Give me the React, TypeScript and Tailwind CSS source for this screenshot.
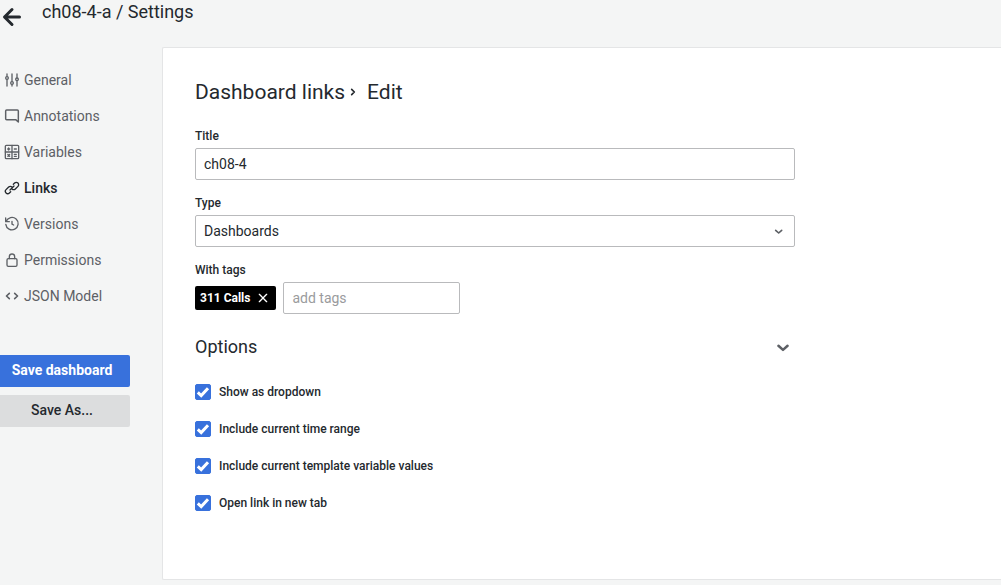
import { useState } from "react";
import type { ReactNode } from "react";

function Glyph({ children, className = "size-4" }: { children: ReactNode; className?: string }) {
  return (
    <svg
      viewBox="0 0 24 24"
      className={`shrink-0 ${className}`}
      fill="none"
      stroke="currentColor"
      strokeWidth="2"
      strokeLinecap="round"
      strokeLinejoin="round"
      aria-hidden="true"
    >
      {children}
    </svg>
  );
}

const icons = {
  general: (
    <>
      <path d="M4.5 3v3.5M4.5 11.5V21M12 3v11M12 19v2M19.5 3v5.5M19.5 13.5V21" />
      <circle cx="4.5" cy="9" r="2" />
      <circle cx="12" cy="16.5" r="2" />
      <circle cx="19.5" cy="11" r="2" />
    </>
  ),
  annotations: (
    <path strokeWidth="2.2" d="M4 3h16a1.5 1.5 0 0 1 1.5 1.5V21l-4-3.500H4A1.5 1.5 0 0 1 2.5 16V4.500A1.5 1.5 0 0 1 4 3Z" />
  ),
  variables: (
    <>
      <rect x="2" y="2" width="20" height="20" rx="1.5" />
      <path d="M12 2v20M2 12h20M5.5 7.5h3M7 6v3M15.5 7.5h3M5.8 15.8l2.6 2.6M8.4 15.8l-2.6 2.6M15.5 15.5h3M15.5 18.5h3" />
    </>
  ),
  links: (
    <>
      <path d="M10 17.500l-1.900 1.900a3.500 3.500 0 0 1-5-5L7 10.500a3.500 3.500 0 0 1 5 0" />
      <path d="M14 6.500l1.900-1.900a3.500 3.500 0 0 1 5 5L17 13.500a3.500 3.500 0 0 1-5 0" />
      <path d="M9 15l6-6" />
    </>
  ),
  versions: (
    <>
      <path d="M2.5 3v5.500H8M3.300 8A9.300 9.300 0 1 1 2.700 12.500" />
      <path d="M12 8v4.200l2.500 1.300" />
    </>
  ),
  permissions: (
    <>
      <rect x="4.5" y="10" width="15" height="11.5" rx="2" />
      <path d="M8 10V7a4 4 0 0 1 8 0v3" />
    </>
  ),
  json: <path strokeWidth="2.4" d="M8 8l-4.300 4L8 16M16 8l4.300 4-4.300 4" />,
};

const sections: { label: string; icon: ReactNode; active?: boolean }[] = [
  { label: "General", icon: icons.general },
  { label: "Annotations", icon: icons.annotations },
  { label: "Variables", icon: icons.variables },
  { label: "Links", icon: icons.links, active: true },
  { label: "Versions", icon: icons.versions },
  { label: "Permissions", icon: icons.permissions },
  { label: "JSON Model", icon: icons.json },
];

const options = [
  "Show as dropdown",
  "Include current time range",
  "Include current template variable values",
  "Open link in new tab",
];

function Option({ label }: { label: string }) {
  const [checked, setChecked] = useState(true);
  return (
    <label className="flex items-center gap-2 text-xs font-medium">
      <span className="relative flex size-4">
        <input
          type="checkbox"
          checked={checked}
          onChange={() => setChecked(!checked)}
          className="size-4 appearance-none rounded-xs border border-[#b9babc] bg-white checked:border-[#3871dc] checked:bg-[#3871dc]"
        />
        {checked && (
          <svg
            viewBox="0 0 16 16"
            className="pointer-events-none absolute inset-0 size-4"
            fill="none"
            stroke="white"
            strokeWidth="3"
            aria-hidden="true"
          >
            <path d="M2.8 8.3l3.4 3.2L13 4.2" />
          </svg>
        )}
      </span>
      {label}
    </label>
  );
}

export default function App() {
  const [title, setTitle] = useState("ch08-4");
  const [open, setOpen] = useState(true);

  return (
    <div className="min-h-screen bg-[#f4f5f5] font-['Roboto','Liberation_Sans',sans-serif] text-sm text-[#24292e]">
      <header className="flex h-[47px] items-start gap-5">
        <button type="button" aria-label="Go back" className="mt-1">
          <svg
            viewBox="0 0 22 24"
            className="h-6 w-[22px]"
            fill="none"
            stroke="currentColor"
            strokeWidth="3"
            strokeLinecap="round"
            strokeLinejoin="round"
            aria-hidden="true"
          >
            <path d="M19.5 13H5M12 5.5L4.5 13l7.5 7.5" />
          </svg>
        </button>
        <h1 className="text-lg leading-6">ch08-4-a / Settings</h1>
      </header>

      <div className="flex items-start">
        <aside className="w-[162px] shrink-0 pt-[15px]">
          <nav>
            {sections.map((s) => (
              <a
                key={s.label}
                href="#"
                aria-current={s.active ? "page" : undefined}
                className={`flex h-9 items-center gap-1 pl-1 ${s.active ? "font-medium" : "text-[#5d6065]"}`}
              >
                <Glyph>{s.icon}</Glyph>
                {s.label}
              </a>
            ))}
          </nav>
          <div className="mt-[41px] mr-8 flex flex-col gap-2">
            <button type="button" className="h-8 rounded-r-xs bg-[#3871dc] pr-1.5 pb-0.5 font-bold text-white">
              Save dashboard
            </button>
            <button type="button" className="h-8 rounded-r-xs bg-[#dcddde] pr-1.5 pb-0.5 font-medium">
              Save As...
            </button>
          </div>
        </aside>

        <main className="min-w-0 flex-1 rounded-l-xs border border-r-0 border-[#e4e5e6] bg-white px-8 pt-[30px] pb-[68px]">
          <form className="w-full max-w-[600px]" onSubmit={(e) => e.preventDefault()}>
            <h2 className="flex items-center text-[21px] leading-7">
              <a href="#">Dashboard links</a>
              <Glyph>
                <path strokeWidth="2.5" d="M10 8l4 4-4 4" />
              </Glyph>
              <span className="ml-1.5">Edit</span>
            </h2>

            <label htmlFor="title" className="mt-5 block text-xs leading-5 font-medium">
              Title
            </label>
            <input
              id="title"
              value={title}
              onChange={(e) => setTitle(e.target.value)}
              className="mt-0.5 block h-8 w-full rounded-xs border border-[#b9babc] px-2"
            />

            <label htmlFor="type" className="mt-[13px] block text-xs leading-5 font-medium">
              Type
            </label>
            <div className="relative mt-0.5">
              <select
                id="type"
                className="block h-8 w-full appearance-none rounded-xs border border-[#b9babc] bg-white px-2"
              >
                <option>Dashboards</option>
                <option>Link</option>
              </select>
              <Glyph className="pointer-events-none absolute top-2 right-2 size-4 text-[#5d6065]">
                <path strokeWidth="2.5" d="M7 11l4.5 4 4.5-4" />
              </Glyph>
            </div>

            <label htmlFor="tags" className="mt-[13px] block text-xs leading-5 font-medium">
              With tags
            </label>
            <div className="mt-0.5 flex items-center gap-[7px]">
              <span className="flex h-6 items-center gap-[5px] rounded-xs bg-black px-[5px] text-xs font-bold text-white">
                311 Calls
                <button type="button" aria-label="Remove tag 311 Calls">
                  <Glyph>
                    <path d="M6.5 6.5l11 11M17.5 6.5l-11 11" />
                  </Glyph>
                </button>
              </span>
              <input
                id="tags"
                placeholder="add tags"
                className="h-8 w-[177px] rounded-xs border border-[#b9babc] px-2 placeholder:text-[#9a9b9d]"
              />
            </div>

            <button
              type="button"
              aria-expanded={open}
              onClick={() => setOpen(!open)}
              className="mt-[19px] flex h-7 w-full items-center justify-between pr-0.5 text-lg"
            >
              Options
              <Glyph className="size-5 text-[#5d6065]">
                <path strokeWidth="3" d="M6.5 10.5l5.5 5 5.5-5" />
              </Glyph>
            </button>

            {open && (
              <div className="mt-[23px] flex flex-col gap-[21px]">
                {options.map((label) => (
                  <Option key={label} label={label} />
                ))}
              </div>
            )}
          </form>
        </main>
      </div>
    </div>
  );
}
